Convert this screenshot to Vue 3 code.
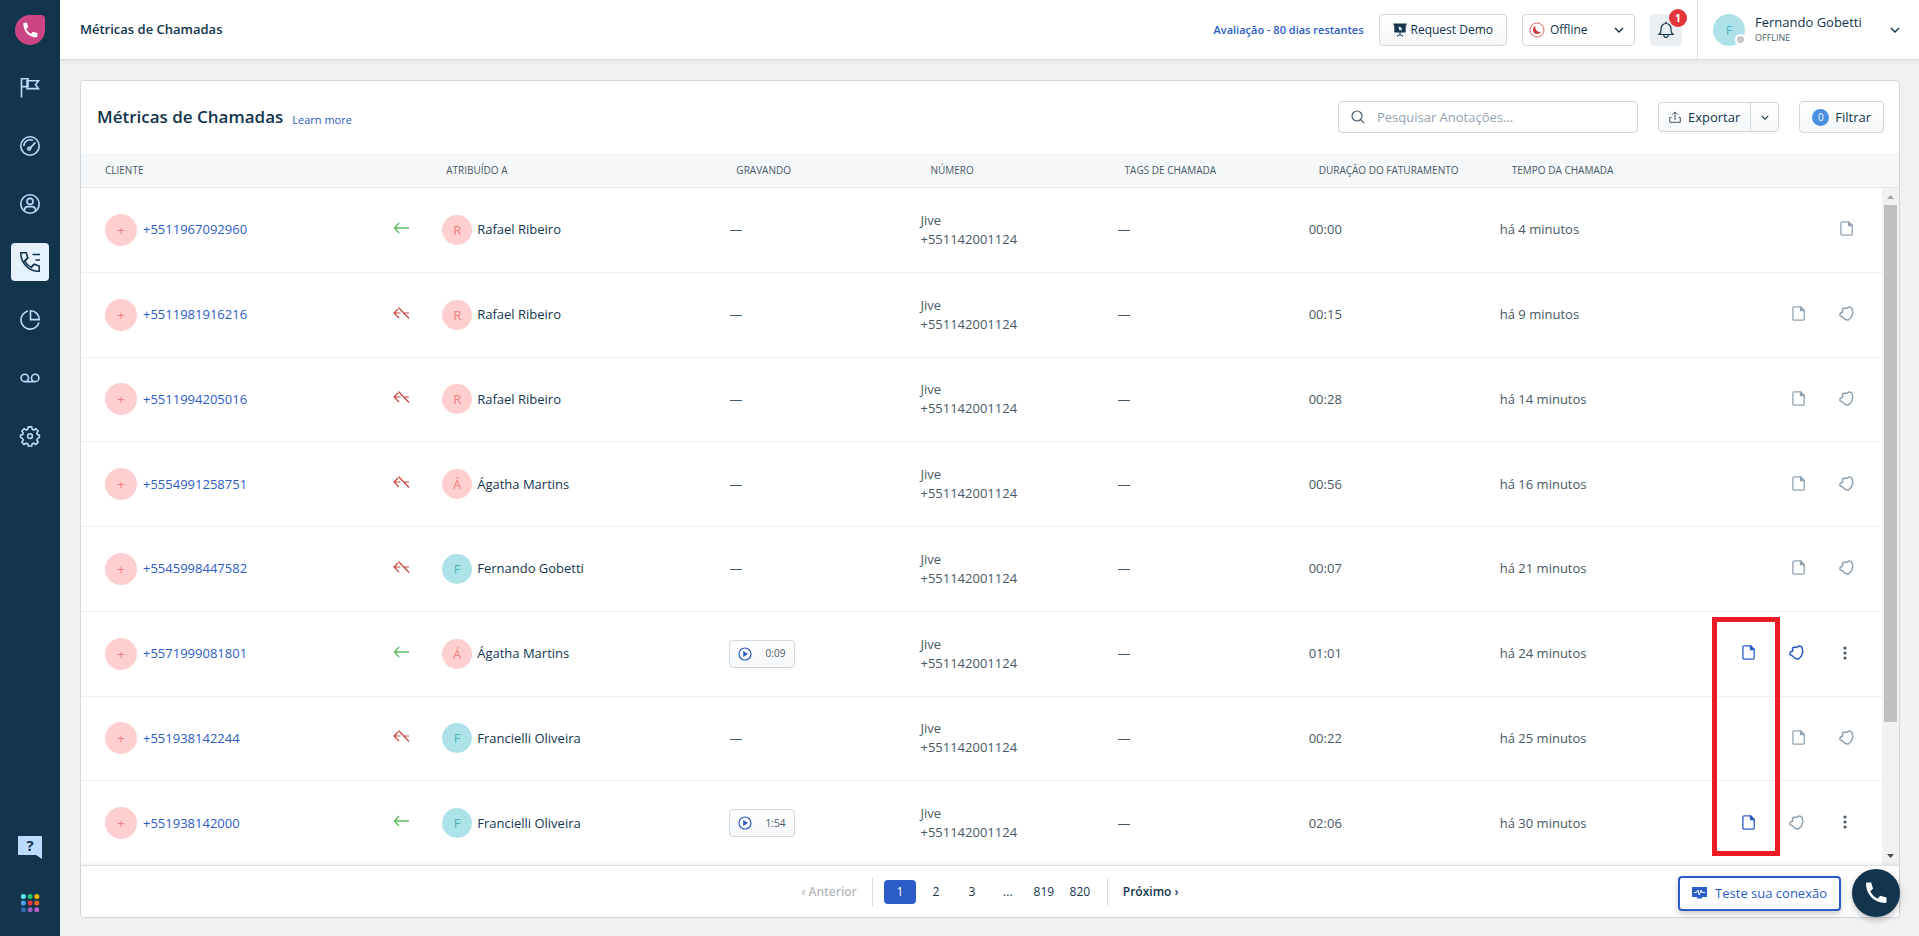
<script setup>
import { ref } from 'vue'

const search = ref('')
const agentStatus = ref('offline')
const currentPage = ref(1)

const navItems = [
  { name: 'Primeiros passos', paths: ['M1.500 19.500V.800H8v7.800H1.500', 'M7 2.800h11.500l-3 3.900 3 3.900H7z'] },
  {
    name: 'Painel',
    paths: ['M10 .8a9.2 9.2 0 1 0 0 18.4A9.2 9.2 0 0 0 10 .8z', 'M3.8 10A6.4 6.4 0 0 1 13 4.4M9.6 12.6L15.4 6.4', 'M9.2 11.2a1.4 1.4 0 1 0 .1 2.8 1.4 1.4 0 0 0-.1-2.8z'],
  },
  {
    name: 'Contatos',
    paths: ['M10 .8a9.2 9.2 0 1 0 0 18.4A9.2 9.2 0 0 0 10 .8z', 'M10 4.4a3 3 0 1 0 0 6 3 3 0 0 0 0-6z', 'M4.4 17c0-3 1.6-4.4 3.6-4.4h4c2 0 3.6 1.4 3.6 4.4'],
  },
  {
    name: 'Métricas de Chamadas',
    active: true,
    paths: ['M.8.8h5.4l1.6 5-3.2 3.4a17 17 0 0 0 6.4 6.2l3.2-3.2 5 1.8v5.2C9.400 19.600.800 11.600.800.800z', 'M12.500 2.500h7.500M15.500 8h4.500', 'M7.800 5.800L4.600 9.200M11 15.400l3.200-3.200'],
  },
  { name: 'Relatórios', paths: ['M8 1A9.200 9.200 0 1 0 19 12.500', 'M10.500.800V9.600h8.700C19.200 4.600 15.400.800 10.500.800z'] },
  { name: 'Correio de voz', paths: ['M4.800 6.200a3.700 3.700 0 1 0 0 7.400 3.700 3.700 0 0 0 0-7.400zM15.200 6.200a3.700 3.700 0 1 0 0 7.400 3.700 3.700 0 0 0 0-7.400zM4.800 13.600h10.400'] },
  {
    name: 'Configurações',
    paths: [
      'M8.300.900h3.400l.5 2.400 1.500.7 2.200-1.300 2.200 2.300-1.300 2.100.6 1.500 2 .5v2.300l-2 1.300-.6 1.300 1.300 2.200-2.200 2.200-2.200-1.200-1.500.6-.5 2.200H8.300l-.5-2.200-1.500-.6-2.200 1.200-2.200-2.200 1.300-2.200-.6-1.300-2-1.300V9.100l2-.5.6-1.500L1.900 5l2.200-2.300L6.300 4l1.500-.7z',
      'M10 7.700a2.400 2.400 0 1 0 0 4.800 2.400 2.400 0 0 0 0-4.800z',
    ],
  },
]

const appDots = ['#5ee7f0', '#25c16f', '#f5b50a', '#4aa3ef', '#e43538', '#f06521', '#2c6fb0', '#9c5fc4', '#b860cf']

const columns = ['Cliente', 'Atribuído a', 'Gravando', 'Número', 'Tags de chamada', 'Duração do faturamento', 'Tempo da chamada']

// note / tag: 'off' draws grey, 'on' draws blue
const calls = [
  { phone: '+5511967092960', missed: false, agent: 'Rafael Ribeiro', duration: '00:00', time: 'há 4 minutos', note: 'off' },
  { phone: '+5511981916216', missed: true, agent: 'Rafael Ribeiro', duration: '00:15', time: 'há 9 minutos', note: 'off', tag: 'off' },
  { phone: '+5511994205016', missed: true, agent: 'Rafael Ribeiro', duration: '00:28', time: 'há 14 minutos', note: 'off', tag: 'off' },
  { phone: '+5554991258751', missed: true, agent: 'Ágatha Martins', duration: '00:56', time: 'há 16 minutos', note: 'off', tag: 'off' },
  { phone: '+5545998447582', missed: true, agent: 'Fernando Gobetti', duration: '00:07', time: 'há 21 minutos', note: 'off', tag: 'off' },
  { phone: '+5571999081801', missed: false, agent: 'Ágatha Martins', rec: '0:09', duration: '01:01', time: 'há 24 minutos', note: 'on', tag: 'on', more: true },
  { phone: '+551938142244', missed: true, agent: 'Francielli Oliveira', duration: '00:22', time: 'há 25 minutos', note: 'off', tag: 'off' },
  { phone: '+551938142000', missed: false, agent: 'Francielli Oliveira', rec: '1:54', duration: '02:06', time: 'há 30 minutos', note: 'on', tag: 'off', more: true },
]

const pages = [1, 2, 3, '...', 819, 820]

function goTo(page) {
  if (typeof page === 'number') currentPage.value = page
}
</script>

<template>
  <div class="app">
    <nav class="sidebar">
      <a href="#" class="logo" aria-label="Início">
        <svg width="16" height="16" viewBox="0 0 24 24">
          <path fill="#fff" d="M2 2.500C2 1.500 2.700 1 3.500 1h4L9.300 8 6.200 10.600a17 17 0 0 0 7.400 7.300l2.500-3.200 6.900 1.900v4.700c0 1-.7 1.700-1.700 1.700C10.500 23 2 14 2 2.500z" />
        </svg>
      </a>
      <a v-for="item in navItems" :key="item.name" href="#" class="nav-item" :class="{ active: item.active }" :aria-label="item.name">
        <svg width="22" height="22" viewBox="-1 -1 22 22" fill="none" stroke="currentColor" stroke-width="1.6">
          <path v-for="d in item.paths" :key="d" :d="d" />
        </svg>
      </a>
      <div class="nav-bottom">
        <a href="#" class="help">
          <svg width="24" height="23" viewBox="0 0 24 23"><path fill="#bbdcfe" d="M1 0h22a1 1 0 0 1 1 1v22l-6-4H1a1 1 0 0 1-1-1V1a1 1 0 0 1 1-1z" /></svg>
          <span>?</span>
        </a>
        <button class="apps" aria-label="Aplicativos">
          <svg width="20" height="20" viewBox="0 0 20 20">
            <circle v-for="(color, i) in appDots" :key="i" :cx="3.400 + (i % 3) * 6.700" :cy="3.400 + Math.floor(i / 3) * 6.700" r="2.500" :fill="color" />
          </svg>
        </button>
      </div>
    </nav>

    <div class="page">
      <header class="topbar">
        <span class="crumb">Métricas de Chamadas</span>
        <a href="#" class="trial">Avaliação - 80 dias restantes</a>
        <button class="btn demo">
          <svg width="14" height="14" viewBox="0 0 14 14">
            <path fill="#12344d" d="M.500.500h13v2h-.8v7H1.300v-7H.500z" />
            <path fill="#fff" d="M5.500 3.200l4 2.200-1.500.5 1 1.500-.8.600-1-1.500-1 .9z" />
            <path stroke="#12344d" fill="none" d="M7 9v3.500M4 13.500l3-2 3 2" />
          </svg>
          Request Demo
        </button>
        <label class="status">
          <svg width="16" height="16" viewBox="0 0 16 16">
            <circle cx="8" cy="8" r="7" fill="#fff" stroke="#d9534f" stroke-width=".9" />
            <path fill="#cb3a3a" d="M6.500 3.800a4.300 4.300 0 1 0 5.500 6A4.500 4.500 0 0 1 6.500 3.800z" />
          </svg>
          <select v-model="agentStatus" aria-label="Status">
            <option value="offline">Offline</option>
            <option value="online">Online</option>
          </select>
          <svg class="chevron" width="10" height="6" viewBox="0 0 10 6"><path d="M1 1l4 4 4-4" /></svg>
        </label>
        <button class="bell" aria-label="Notificações">
          <svg width="18" height="18" viewBox="0 0 18 18" fill="none" stroke="#12344d" stroke-width="1.200">
            <path d="M2 13.500h14c-1.500-1.200-2-2.500-2-4.500V7.500a5 5 0 0 0-10 0V9c0 2-.5 3.300-2 4.500z" />
            <path d="M9 2.500V.500M6.800 14c.2 3.200 4.200 3.200 4.400 0" />
          </svg>
          <span class="badge">1</span>
        </button>
        <div class="profile">
          <span class="avatar teal">F<i class="presence"></i></span>
          <div class="who">
            <span class="name">Fernando Gobetti</span>
            <span class="state">OFFLINE</span>
          </div>
          <button class="plain" aria-label="Menu do usuário">
            <svg class="chevron" width="10" height="6" viewBox="0 0 10 6"><path d="M1 1l4 4 4-4" /></svg>
          </button>
        </div>
      </header>

      <main class="content">
        <section class="card">
          <div class="card-head">
            <h1>Métricas de Chamadas</h1>
            <a href="#" class="learn">Learn more</a>
            <label class="search">
              <svg width="14" height="14" viewBox="0 0 14 14" fill="none" stroke="#475867" stroke-width="1.200">
                <circle cx="6" cy="6" r="5" /><path d="M9.600 9.600l3.600 3.600" />
              </svg>
              <input v-model="search" type="text" placeholder="Pesquisar Anotações..." aria-label="Pesquisar Anotações" />
            </label>
            <div class="export">
              <button class="export-main">
                <svg width="12" height="12" viewBox="0 0 12 12" fill="none" stroke="#475867">
                  <path d="M2.500 6.500H.700v4.800h10.600V6.500H9.500M6 9V1M3.300 3.500L6 .900l2.700 2.600" />
                </svg>
                Exportar
              </button>
              <button class="export-more" aria-label="Opções de exportação">
                <svg class="chevron" width="8" height="5" viewBox="0 0 10 6"><path d="M1 1l4 4 4-4" /></svg>
              </button>
            </div>
            <button class="btn filter"><span class="count">0</span>Filtrar</button>
          </div>

          <div class="table-wrap">
            <table class="calls">
              <thead>
                <tr>
                  <th v-for="col in columns" :key="col" scope="col">{{ col }}</th>
                </tr>
              </thead>
              <tbody>
                <tr v-for="call in calls" :key="call.phone">
                  <td class="customer">
                    <span class="avatar pink">+</span>
                    <a href="#">{{ call.phone }}</a>
                    <svg v-if="call.missed" class="direction" width="17" height="14" viewBox="0 0 17 14" fill="none" stroke="#c9453f" stroke-width="1.200">
                      <path d="M1 7h6.500M10.500 7H16M5 3L1 7l5 5M5.500 1.500l10.500 11" />
                    </svg>
                    <svg v-else class="direction" width="17" height="14" viewBox="0 0 17 14" fill="none" stroke="#5bbd5a" stroke-width="1.400">
                      <path d="M1.500 7H16M6 2L1.500 7 6 12" />
                    </svg>
                  </td>
                  <td class="agent">
                    <span class="avatar small" :class="call.agent[0] === 'F' ? 'teal' : 'pink'">{{ call.agent[0] }}</span>
                    <span>{{ call.agent }}</span>
                  </td>
                  <td>
                    <button v-if="call.rec" class="player">
                      <svg width="14" height="14" viewBox="0 0 14 14">
                        <circle cx="7" cy="7" r="6" fill="#fff" stroke="#2c5cc5" stroke-width="1.200" />
                        <path fill="#2c5cc5" d="M5.200 4l4.800 3-4.800 3z" />
                      </svg>
                      {{ call.rec }}
                    </button>
                    <span v-else>—</span>
                  </td>
                  <td class="number"><span>Jive</span><span>+551142001124</span></td>
                  <td>—</td>
                  <td>{{ call.duration }}</td>
                  <td>{{ call.time }}</td>
                  <td class="actions">
                    <button :class="call.note" aria-label="Anotação">
                      <svg width="13" height="15" viewBox="0 0 13 15" fill="none" stroke="currentColor" stroke-width="1.300">
                        <path d="M2.300.800h6.200l3.700 3.700v8.400c0 .8-.5 1.300-1.300 1.300H2.300c-.8 0-1.400-.5-1.400-1.300V2.100C.900 1.300 1.500.800 2.300.800z" />
                        <path fill="currentColor" d="M8.500.800v3.700h3.700z" />
                      </svg>
                    </button>
                    <button v-if="call.tag" :class="call.tag" aria-label="Tag">
                      <svg width="15" height="15" viewBox="0 0 15 15" fill="none" stroke="currentColor" stroke-width="1.500" stroke-linejoin="round">
                        <path d="M3.500 3L6 2l1.500.6L10 .900l2 .5 1.200 1.600.6 3.800-1.500 4.500L9 14.200 5.500 13 3.800 11.200.900 9.500l.3-2.300L3.700 6z" />
                      </svg>
                    </button>
                    <button v-if="call.more" class="more" aria-label="Mais">
                      <svg width="4" height="14" viewBox="0 0 4 14" fill="currentColor">
                        <circle cx="2" cy="2" r="1.600" /><circle cx="2" cy="7" r="1.600" /><circle cx="2" cy="12" r="1.600" />
                      </svg>
                    </button>
                  </td>
                </tr>
              </tbody>
            </table>
            <div class="scrollbar">
              <svg width="7" height="4" viewBox="0 0 7 4"><path fill="#a3a3a3" d="M0 4L3.500 0 7 4z" /></svg>
              <span class="thumb"></span>
              <svg width="7" height="4" viewBox="0 0 7 4"><path fill="#505050" d="M0 0l3.500 4L7 0z" /></svg>
            </div>
          </div>

          <footer class="pager">
            <button class="prev" disabled>‹ Anterior</button>
            <div class="numbers">
              <button v-for="page in pages" :key="page" :class="{ current: page === currentPage }" @click="goTo(page)">{{ page }}</button>
            </div>
            <button class="next">Próximo ›</button>
          </footer>
        </section>
      </main>
    </div>

    <div class="highlight"></div>

    <div class="floating">
      <button class="test">
        <svg width="15" height="12" viewBox="0 0 15 12">
          <path fill="#2c5cc5" d="M0 0h15v10H9.500l1 1.500h-6l1-1.500H0z" />
          <path fill="none" stroke="#fff" d="M2 5.500h2.500l1.300-2.500L7.300 8l1.700-5 1 2.500h3" />
        </svg>
        Teste sua conexão
      </button>
      <button class="dial" aria-label="Telefone">
        <svg width="24" height="24" viewBox="0 0 24 24">
          <path fill="#fff" d="M2 2.500C2 1.700 2.500 1.500 3.200 1.500h4L9 7.800 6.200 10.400a17 17 0 0 0 7.400 7.300l2.600-2.900 6.300 1.700v4.200c0 .9-.5 1.300-1.400 1.300C10.500 22 2 13.500 2 2.500z" />
        </svg>
      </button>
    </div>
  </div>
</template>

<style>
body {
  margin: 0;
  background: #f1f1f1;
}
</style>

<style scoped>
.app {
  position: relative;
  display: flex;
  height: 100vh;
  min-height: 700px;
  background: #f1f1f1;
  color: #475867;
  font-family: "Open Sans", "Noto Sans", sans-serif;
  font-size: 13px;
  line-height: 19px;
}

.app * { box-sizing: border-box; }

a { color: #2c5cc5; text-decoration: none; }

button {
  padding: 0;
  border: none;
  background: none;
  color: inherit;
  font: inherit;
  cursor: pointer;
}

svg { display: block; flex-shrink: 0; }

.chevron { fill: none; stroke: #12344d; stroke-width: 1.4; }

.sidebar {
  display: flex;
  flex-direction: column;
  align-items: center;
  flex-shrink: 0;
  gap: 20px;
  width: 60px;
  padding: 15px 0;
  background: #12344d;
}

.logo {
  display: flex;
  align-items: center;
  justify-content: center;
  width: 30px;
  height: 30px;
  margin-bottom: 4px;
  border-radius: 50% 4px 50% 50%;
  background: #cb4585;
}

.nav-item {
  display: flex;
  align-items: center;
  justify-content: center;
  width: 38px;
  height: 38px;
  border-radius: 4px;
  color: #bbdcfe;
}

.nav-item.active { background: #e5f2fd; color: #12344d; }

.nav-bottom {
  display: flex;
  flex-direction: column;
  align-items: center;
  gap: 34px;
  margin-top: auto;
  padding-bottom: 8px;
}

.help { display: grid; color: #12344d; font-size: 15px; font-weight: 700; }
.help > * { grid-area: 1 / 1; }
.help span { text-align: center; }

.page {
  display: flex;
  flex-direction: column;
  flex: 1;
  min-width: 0;
}

.topbar {
  display: flex;
  align-items: center;
  flex-shrink: 0;
  gap: 15px;
  height: 60px;
  padding-left: 20px;
  border-bottom: 1px solid #d8dcdf;
  background: #fff;
  box-shadow: 0 2px 4px rgba(0, 0, 0, 0.06);
}

.crumb { margin-right: auto; color: #12344d; font-weight: 600; }

.trial { font-size: 11px; font-weight: 600; }

.btn {
  display: flex;
  align-items: center;
  justify-content: center;
  height: 32px;
  border: 1px solid #cfd7df;
  border-radius: 4px;
  background: linear-gradient(#fff, #f5f7f9);
  color: #12344d;
}

.demo { gap: 4px; padding: 0 13px; font-size: 12px; font-weight: 500; }

.status {
  display: flex;
  align-items: center;
  gap: 5px;
  width: 113px;
  height: 32px;
  padding: 0 10px 0 6px;
  border: 1px solid #cfd7df;
  border-radius: 4px;
  background: #fff;
}

.status select {
  flex: 1;
  min-width: 0;
  padding: 0;
  border: none;
  outline: none;
  appearance: none;
  background: none;
  color: #12344d;
  font: inherit;
  font-size: 12px;
}

.bell {
  position: relative;
  display: flex;
  align-items: center;
  justify-content: center;
  width: 32px;
  height: 32px;
  border-radius: 4px;
  background: #ebeff3;
}

.badge {
  position: absolute;
  top: -5px;
  right: -5px;
  width: 18px;
  height: 18px;
  border-radius: 50%;
  background: #e43538;
  color: #fff;
  font-size: 11px;
  font-weight: 700;
  line-height: 18px;
}

.profile {
  display: flex;
  align-items: center;
  gap: 10px;
  width: 222px;
  height: 100%;
  padding: 0 19px 0 15px;
  border-left: 1px solid #d8dcdf;
}

.who { display: flex; flex-direction: column; flex: 1; line-height: 16px; }
.name { color: #12344d; }
.state { font-size: 9px; }

.avatar {
  position: relative;
  flex-shrink: 0;
  width: 32px;
  height: 32px;
  border-radius: 50%;
  font-size: 13px;
  line-height: 32px;
  text-align: center;
}

.avatar.small { width: 30px; height: 30px; line-height: 30px; }
.pink { background: #ffcfcf; color: #ef8080; }
.teal { background: #ade3e8; color: #4bb3bf; }

.presence {
  position: absolute;
  right: -1px;
  bottom: 1px;
  width: 11px;
  height: 11px;
  border: 2px solid #fff;
  border-radius: 50%;
  background: #c8c8c8;
}

.content { display: flex; flex: 1; min-height: 0; padding: 20px 19px 18px 20px; }

.card {
  display: flex;
  flex-direction: column;
  flex: 1;
  min-width: 0;
  border: 1px solid #cfd7df;
  border-radius: 4px;
  background: #fff;
}

.card-head {
  display: flex;
  align-items: center;
  flex-shrink: 0;
  height: 72px;
  padding: 0 15px 0 16px;
}

h1 { margin: 0; color: #12344d; font-size: 17px; font-weight: 600; line-height: 24px; }

.learn { margin: 4px auto 0 9px; font-size: 11px; }

.search {
  display: flex;
  align-items: center;
  gap: 12px;
  width: 300px;
  height: 32px;
  padding: 0 12px;
  border: 1px solid #cfd7df;
  border-radius: 4px;
}

.search input {
  flex: 1;
  min-width: 0;
  padding: 0;
  border: none;
  outline: none;
  background: none;
  color: #12344d;
  font: inherit;
}

.search input::placeholder { color: #92a2b1; opacity: 1; }

.export {
  display: flex;
  height: 30px;
  margin: 0 20px;
  border: 1px solid #cfd7df;
  border-radius: 4px;
  background: linear-gradient(#fff, #f5f7f9);
  color: #12344d;
}

.export-main { display: flex; align-items: center; gap: 7px; padding: 0 10px; }

.export-more {
  display: flex;
  align-items: center;
  justify-content: center;
  width: 28px;
  border-left: 1px solid #cfd7df;
}

.filter { gap: 6px; padding: 0 12px; }

.count {
  width: 17px;
  height: 17px;
  border-radius: 50%;
  background: #4a90e2;
  color: #fff;
  font-size: 10px;
  line-height: 17px;
}

.table-wrap { position: relative; display: flex; flex: 1; min-height: 0; }

.calls { display: flex; flex-direction: column; flex: 1; min-width: 0; }

.calls tr {
  display: grid;
  grid-template-columns: 365fr 290fr 194fr 194fr 194fr 193fr 194fr 193fr;
  align-items: center;
}

.calls tbody tr { grid-template-columns: 361fr 287fr 191fr 197fr 191fr 191fr 192fr 191fr; }

.calls th, .calls td { min-width: 0; padding: 0; }

thead { display: block; border-bottom: 1px solid #e3e7eb; background: #f5f7f9; }

th {
  color: #475867;
  font-size: 10px;
  font-weight: 500;
  line-height: 34px;
  text-align: left;
  text-transform: uppercase;
  white-space: nowrap;
}

.calls th:first-child, .calls .customer { padding-left: 24px; }

tbody { display: flex; flex-direction: column; flex: 1; margin-right: 16px; }

tbody tr { flex: 1; border-bottom: 1px solid #ebeff3; }

tbody tr:last-child { border-bottom: none; }

.customer { display: flex; align-items: center; gap: 6px; }
.direction { margin: 0 32px 4px auto; }

.agent { display: flex; align-items: center; gap: 5px; color: #12344d; }

.number span { display: block; }

.player {
  display: flex;
  align-items: center;
  justify-content: space-between;
  width: 66px;
  height: 28px;
  padding: 0 9px 0 8px;
  border: 1px solid #cfd7df;
  border-radius: 4px;
  background: linear-gradient(#fff, #f5f7f9);
  font-size: 10px;
}

.calls .actions { display: flex; justify-content: flex-end; padding: 0 13px 2px 0; }

.actions button {
  display: flex;
  align-items: center;
  justify-content: center;
  width: 48px;
  height: 32px;
}

.off { color: #92a2b1; }
.on { color: #2c5cc5; }
.actions .more { width: 50px; color: #475867; }

.scrollbar {
  position: absolute;
  top: 35px;
  right: 0;
  bottom: 0;
  display: flex;
  flex-direction: column;
  align-items: center;
  width: 17px;
  padding: 7px 0;
  background: #f1f1f1;
}

.thumb {
  flex: 0 0 78%;
  width: 13px;
  margin: 6px 0 auto;
  background: #c1c1c1;
}

.pager {
  position: relative;
  display: flex;
  align-items: center;
  justify-content: center;
  flex-shrink: 0;
  height: 52px;
  border-top: 1px solid #dfe3e6;
  border-radius: 0 0 4px 4px;
  background: #fff;
  box-shadow: 0 -2px 3px rgba(0, 0, 0, 0.06);
  color: #12344d;
  font-size: 12px;
}

.numbers {
  display: flex;
  align-items: center;
  gap: 4px;
  height: 28px;
  margin: 0 15px;
  padding: 0 11px;
  border: solid #dadfe3;
  border-width: 0 1px;
}

.numbers button { width: 32px; height: 24px; border-radius: 4px; }
.numbers .current { background: #2c5cc5; color: #fff; }
.prev { color: #b5b9bd; cursor: default; }
.prev, .next { font-weight: 600; }

.highlight {
  position: absolute;
  top: 617px;
  right: 139px;
  width: 68px;
  height: 239px;
  border: 5px solid #ed1c24;
  pointer-events: none;
}

.floating {
  position: absolute;
  right: 19px;
  bottom: 19px;
  display: flex;
  align-items: center;
  gap: 11px;
}

.test {
  display: flex;
  align-items: center;
  gap: 8px;
  height: 35px;
  padding: 0 12px;
  border: 2px solid #2c5cc5;
  border-radius: 4px;
  background: #fff;
  box-shadow: 0 3px 6px rgba(0, 0, 0, 0.2);
  color: #2c5cc5;
}

.dial {
  display: flex;
  align-items: center;
  justify-content: center;
  width: 48px;
  height: 48px;
  border-radius: 50%;
  background: #12344d;
  box-shadow: 0 3px 6px rgba(0, 0, 0, 0.25);
}
</style>
